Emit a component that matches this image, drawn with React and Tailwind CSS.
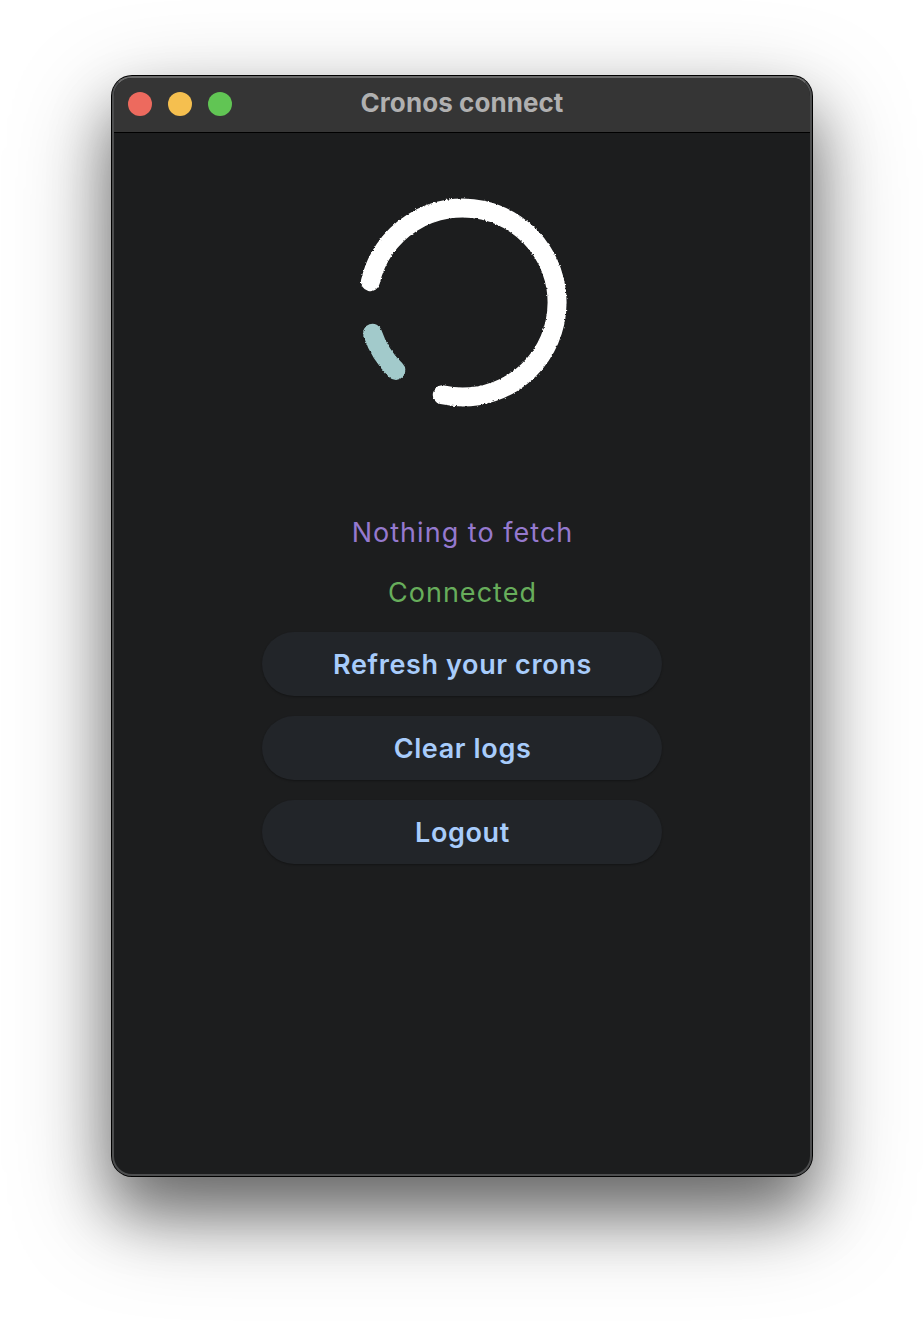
const actions = ["Refresh your crons", "Clear logs", "Logout"];

function Spinner() {
  return (
    <svg className="mt-[47px] h-[240px] w-[250px]" viewBox="-2.7 0 250 240" fill="none">
      <defs>
        <filter id="rough" x="0" y="0" width="250" height="240" filterUnits="userSpaceOnUse">
          <feTurbulence type="fractalNoise" baseFrequency="0.5" numOctaves="1" seed="4" result="n" />
          <feDisplacementMap in="SourceGraphic" in2="n" scale="2.8" xChannelSelector="R" yChannelSelector="G" />
        </filter>
      </defs>
      <g filter="url(#rough)" strokeWidth="19" strokeLinecap="round">
        <path stroke="#ffffff" d="M30.7 101.7A94.5 94.5 0 1 1 102.6 214.8" />
        <path stroke="#a2cacb" d="M32.8 153.2A94.5 94.5 0 0 0 56.2 190.4" />
      </g>
    </svg>
  );
}

export default function App() {
  return (
    <div className="flex h-[1324px] w-[924px] justify-center overflow-hidden bg-white pt-[76px] font-['Inter',sans-serif]">
      <main className="h-[1100px] w-[700px] rounded-[20px] bg-[#1c1d1e] shadow-[0_0_0_1px_#000,0_36px_60px_0_rgba(0,0,0,0.42),0_34px_100px_0_rgba(0,0,0,0.34)]">
        <div className="flex h-full flex-col overflow-hidden rounded-[20px] border-2 border-[#4d4e4f] border-t-[#6a6a6a]">
          <header className="grid h-[55px] shrink-0 grid-cols-[1fr_auto_1fr] items-center border-b border-black bg-[#353535] px-[14px] pb-[2px]">
            <div className="flex gap-4">
              <span className="size-6 rounded-full bg-[#ed6a5e]" />
              <span className="size-6 rounded-full bg-[#f5bf4f]" />
              <span className="size-6 rounded-full bg-[#61c554]" />
            </div>
            <h1 className="pb-[3px] text-[26px] leading-8 font-bold tracking-[0.07px] text-[#b0b0b0]">Cronos connect</h1>
          </header>
          <section className="flex flex-col items-center">
            <Spinner />
            <p className="mt-[93px] pl-px text-[27px] leading-10 tracking-[1.03px] text-[#9579ce]">Nothing to fetch</p>
            <p className="mt-5 pl-px text-[27px] leading-10 tracking-[1.03px] text-[#67ad5b]">Connected</p>
            <div className="mt-[19px] flex flex-col gap-5">
              {actions.map((label) => (
                <button
                  key={label}
                  className="h-16 w-[400px] rounded-full bg-[#222529] pt-[2px] pl-px text-[27px] font-semibold tracking-[0.63px] text-[#a8ccfb] shadow-[0_1px_2px_rgba(0,0,0,0.3)]"
                >
                  {label}
                </button>
              ))}
            </div>
          </section>
        </div>
      </main>
    </div>
  );
}
